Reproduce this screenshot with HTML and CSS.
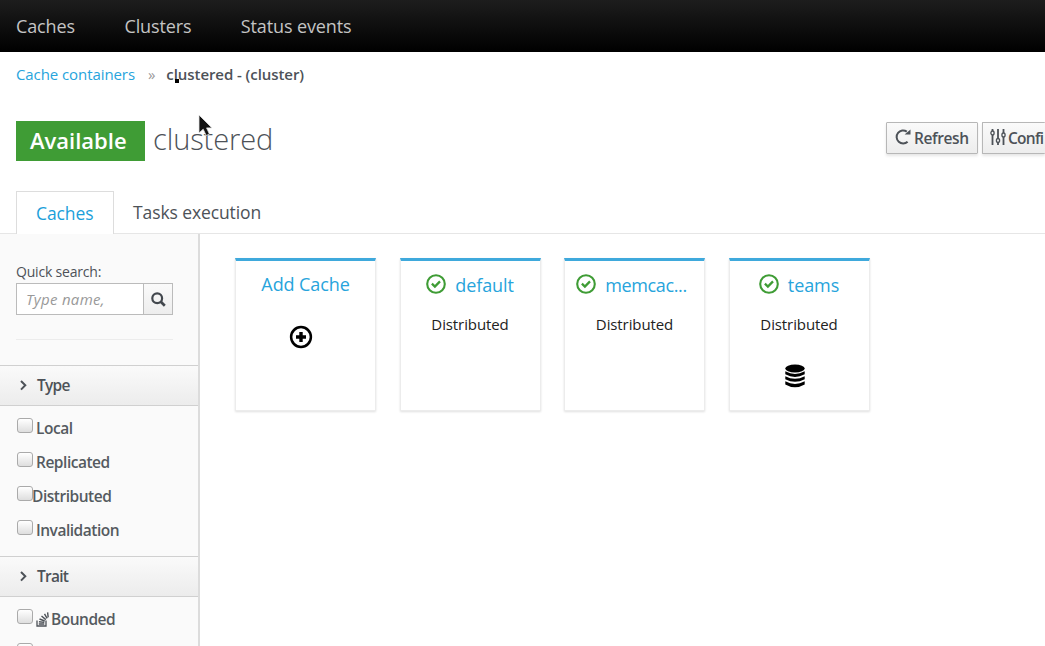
FILE: index.html
```html
<!DOCTYPE html>
<html lang="en">
<head>
<meta charset="utf-8">
<title>Cache containers</title>
<link rel="stylesheet" href="styles.css">
</head>
<body>
<nav class="navbar"><a>Caches</a><a>Clusters</a><a>Status events</a></nav>
<div class="breadcrumb"><a>Cache containers</a><span class="sep">»</span><b>clustered - (cluster)</b><i class="dot"></i></div>
<header class="heading">
  <span class="status">Available</span>
  <h1>clustered</h1>
  <div class="actions">
    <button class="btn refresh"><svg width="16" height="16" viewBox="0 0 16 16"><path d="M12.6 12.7A6.5 6.5 0 1 1 11.8 2.6" fill="none" stroke="#4d5258" stroke-width="2"/><path d="M9.6 5.5h5.9V.4z" fill="#4d5258"/></svg><span>Refresh</span></button>
    <button class="btn config"><svg width="16" height="16" viewBox="0 0 16 16" fill="none" stroke="#4d5258"><path d="M2.5 0v2M2.5 6v10M8 0v9M8 14v2M13.5 0v4M13.5 8v8" stroke-width="1.8"/><ellipse cx="2.5" cy="4" rx="1.6" ry="2" stroke-width="1.3"/><ellipse cx="8" cy="11.5" rx="1.6" ry="2" stroke-width="1.3"/><ellipse cx="13.5" cy="6" rx="1.6" ry="2" stroke-width="1.3"/></svg><span>Confi</span></button>
  </div>
  <svg class="pointer" width="18" height="26" viewBox="0 0 18 26"><path d="M1 2v18l4.2-3.8 3 6.3 3.2-1.4-2.8-6.2H14z" fill="#111" stroke="#e4e4e4" stroke-width=".8"/></svg>
</header>
<div class="tabs"><a class="tab active">Caches</a><a class="tab tasks">Tasks execution</a></div>
<main>
  <aside>
    <div class="search">
      <label>Quick search:</label>
      <div class="field"><span class="input">Type name,</span><span class="go"><svg width="15" height="15" viewBox="0 0 15 15" fill="none" stroke="#42474d"><circle cx="6.2" cy="6.2" r="4.9" stroke-width="2.2"/><path d="M9.8 9.8l4 4" stroke-width="2.7"/></svg></span></div>
    </div>
    <div class="section"><svg width="7" height="11" viewBox="0 0 7 11"><path d="M1 1l4.3 4.3L1 9.6" fill="none" stroke="#4d5258" stroke-width="2"/></svg><span>Type</span></div>
    <div class="checks types">
      <div class="check"><i></i><span>Local</span></div>
      <div class="check"><i></i><span>Replicated</span></div>
      <div class="check tight"><i></i><span>Distributed</span></div>
      <div class="check"><i></i><span>Invalidation</span></div>
    </div>
    <div class="section"><svg width="7" height="11" viewBox="0 0 7 11"><path d="M1 1l4.3 4.3L1 9.6" fill="none" stroke="#4d5258" stroke-width="2"/></svg><span>Trait</span></div>
    <div class="checks traits">
      <div class="check"><i></i><svg class="trait-icon" width="13" height="15" viewBox="0 0 13 15" fill="none" stroke="#4d5258"><path d="M1 8.5V14h9V8.5" stroke-width="1.3"/><path d="M2.8 12h5.5M2.9 9.8l5.4.6M3.5 7l5.2 2M5.5 4l4.3 3.6M8.5 1.8l2.6 4.5M11.6.3l.6 5" stroke-width="1.4"/></svg><span>Bounded</span></div>
      <div class="check"><i></i></div>
    </div>
  </aside>
  <section class="cards">
    <article class="card add"><div class="title"><a>Add Cache</a></div><svg class="plus" width="24" height="24" viewBox="0 0 24 24" fill="none" stroke="#000"><circle cx="12" cy="12" r="9.9" stroke-width="2.5"/><path d="M12 7v10M7 12h10" stroke-width="3.4"/></svg></article>
    <article class="card"><div class="title"><svg width="20" height="20" viewBox="0 0 20 20" fill="none" stroke="#3f9c35"><circle cx="10" cy="10" r="8.8" stroke-width="2.1"/><path d="M5.9 9.6l3 3 5.1-5.2" stroke-width="2.3"/></svg><a>default</a></div><p>Distributed</p></article>
    <article class="card"><div class="title narrow"><svg width="20" height="20" viewBox="0 0 20 20" fill="none" stroke="#3f9c35"><circle cx="10" cy="10" r="8.8" stroke-width="2.1"/><path d="M5.9 9.6l3 3 5.1-5.2" stroke-width="2.3"/></svg><a>memcac...</a></div><p>Distributed</p></article>
    <article class="card"><div class="title"><svg width="20" height="20" viewBox="0 0 20 20" fill="none" stroke="#3f9c35"><circle cx="10" cy="10" r="8.8" stroke-width="2.1"/><path d="M5.9 9.6l3 3 5.1-5.2" stroke-width="2.3"/></svg><a>teams</a></div><p>Distributed</p><svg class="db" width="20" height="24" viewBox="0 0 20 24"><ellipse cx="10" cy="4.5" rx="9.7" ry="4" /><path d="M.3 7.3q9.7 5.2 19.4 0v3q-9.7 5.2-19.4 0zM.3 12.2q9.7 5.2 19.4 0v3q-9.7 5.2-19.4 0zM.3 17.3q9.7 5.2 19.4 0v3.2q-9.7 5.6-19.4 0z"/></svg></article>
  </section>
</main>
</body>
</html>
```

FILE: styles.css
```css
* { box-sizing: border-box; }
body { margin: 0; width: 1045px; height: 646px; overflow: hidden; display: flex; flex-direction: column; background: #fff; color: #4d5258; font-family: "Open Sans", "Noto Sans", sans-serif; font-size: 16px; white-space: nowrap; }
a { color: #27a4dc; }
svg { flex: none; }
.navbar { height: 52px; flex: none; display: flex; gap: 49.5px; padding-left: 16px; line-height: 53px; font-size: 18px; letter-spacing: -.13px; background: linear-gradient(#1d1d1d, #000); }
.navbar a { color: #c4c4c4; }
.breadcrumb { position: relative; height: 48px; flex: none; padding-left: 16px; line-height: 45px; font-size: 15px; letter-spacing: -.08px; display: flex; }
.breadcrumb b { font-weight: 600; letter-spacing: -.07px; }
.sep { color: #999; margin: 0 11px 0 13px; }
.dot { position: absolute; left: 175px; top: 27px; width: 4px; height: 4px; background: #000; }
.heading { position: relative; height: 91px; flex: none; display: flex; align-items: flex-start; padding: 21px 0 0 16px; }
.status { width: 129px; flex: none; height: 40px; background: #3f9c35; color: #fff; font-size: 22px; font-weight: 600; line-height: 39px; padding-left: 14px; }
h1 { margin: -2px 0 0 8px; width: 733px; flex: none; font-size: 29px; font-weight: 300; line-height: 39px; letter-spacing: -.1px; }
.actions { display: flex; gap: 4px; padding-top: 1px; flex: 1; min-width: 0; }
.btn { height: 32px; flex: none; display: flex; align-items: center; font: 600 15.5px "Open Sans", sans-serif; letter-spacing: -.4px; color: #4d5258; border: 1px solid #b7b7b7; border-radius: 1px; background: linear-gradient(#fafafa, #ededed); box-shadow: 0 2px 3px rgba(0,0,0,.1); padding: 0 7px; gap: 3px; white-space: nowrap; }
.btn svg { margin-top: -2px; }
.refresh { width: 92px; padding-left: 8px; }
.config { width: auto; flex: 1; min-width: 0; padding: 0 0 0 7px; gap: 2px; border-right: 0; letter-spacing: -.75px; }
.pointer { position: absolute; left: 198px; top: 13px; }
.tabs { height: 43px; flex: none; display: flex; border-bottom: 1px solid #e6e6e6; padding-left: 16px; font-size: 17.5px; line-height: 43px; letter-spacing: -.1px; }
.tab.active { width: 98px; height: 43px; padding-left: 19px; border: 1px solid #ddd; border-bottom: 0; line-height: 42px; background: #fff; color: #1b9fda; }
.tab.tasks { color: #4d5258; padding-left: 19px; }
main { display: flex; flex: 1; min-height: 0; }
aside { width: 200px; flex: none; overflow: hidden; background: #fafafa; border-right: 2px solid #dcdcdc; }
.search { height: 106px; margin: 0 25px 0 16px; padding-top: 27px; border-bottom: 1px solid #ececec; }
.search label { display: block; font-size: 14px; line-height: 22px; letter-spacing: -.2px; }
.field { display: flex; height: 32px; border: 1px solid #bbb; background: #fff; }
.input { width: 127px; padding-left: 9px; font-size: 15px; font-style: italic; letter-spacing: .3px; color: #999; line-height: 30px; border-right: 1px solid #bbb; }
.go { flex: 1; display: flex; align-items: center; justify-content: center; background: linear-gradient(#fafafa, #ededed); }
.section { height: 41px; display: flex; align-items: center; padding-left: 20px; gap: 10px; border: solid #d0d0d0; border-width: 1px 0; background: linear-gradient(#fafafa, #ececec); font-weight: 600; font-size: 15.5px; letter-spacing: -.75px; }
.section span { padding-bottom: 1px; }
.search + .section { margin-top: 25px; }
.checks { padding-left: 17px; font-weight: 600; font-size: 15.5px; letter-spacing: -.48px; color: #555a60; }
.types { height: 150px; padding-top: 12px; }
.traits { padding-top: 12px; }
.check { height: 34px; display: flex; align-items: flex-start; line-height: 21px; gap: 3px; }
.check i { width: 16px; height: 15px; flex: none; border: 1px solid #aaa; border-radius: 3px; background: linear-gradient(#fff, #dedede); }
.tight { gap: 0; }
.tight span { margin-left: -1px; }
.trait-icon { margin-top: 3px; }
.traits .check { gap: 2.5px; }
.cards { display: flex; gap: 23.5px; padding: 24px 0 0 35px; align-items: flex-start; }
.card { width: 141px; height: 153px; flex: none; border: 1px solid #ececec; border-top: 3px solid #3fa9dc; box-shadow: 0 1px 2px rgba(0,0,0,.12); display: flex; flex-direction: column; align-items: center; }
.title { height: 48px; display: flex; gap: 9px; font-size: 18px; line-height: 48px; letter-spacing: -.1px; }
.title svg { margin-top: 13px; }
.add .title { line-height: 46px; }
.title.narrow { letter-spacing: -.35px; margin-left: -6px; }
.card p { margin: 0; color: #222; font-size: 15px; line-height: 30px; letter-spacing: -.1px; }
.plus { margin: 16px 9px 0 0; }
.db { margin: 25px 9px 0 0; }
```
